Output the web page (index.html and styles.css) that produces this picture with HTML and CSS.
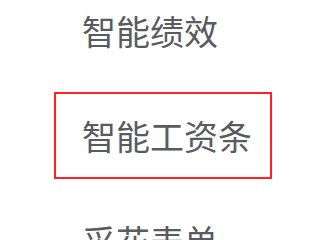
FILE: index.html
```html
<!DOCTYPE html>
<html lang="zh-CN">
<head>
  <meta charset="UTF-8">
  <meta name="viewport" content="width=device-width, initial-scale=1.0">
  <title>菜单</title>
  <link rel="stylesheet" href="styles.css">
</head>
<body>
  <ul class="menu">
    <li class="menu-item">智能绩效</li>
    <li class="menu-item active">智能工资条</li>
    <li class="menu-item">采花表单</li>
  </ul>
</body>
</html>
```

FILE: styles.css
```css
body {
  margin: 0;
  background-color: #fff;
  font-family: 'Noto Sans CJK SC', 'Noto Sans', sans-serif;
  overflow: hidden;
}
.menu {
  list-style: none;
  margin: -13px 0 0 54px;
  padding: 0;
}
.menu-item {
  box-sizing: border-box;
  width: 218px;
  height: 87px;
  margin-bottom: 18px;
  padding-left: 26px;
  display: flex;
  align-items: center;
  border: 2px solid transparent;
  font-size: 34px;
  color: #585b60;
}
.menu-item.active {
  border-color: #ff2222;
}
```
